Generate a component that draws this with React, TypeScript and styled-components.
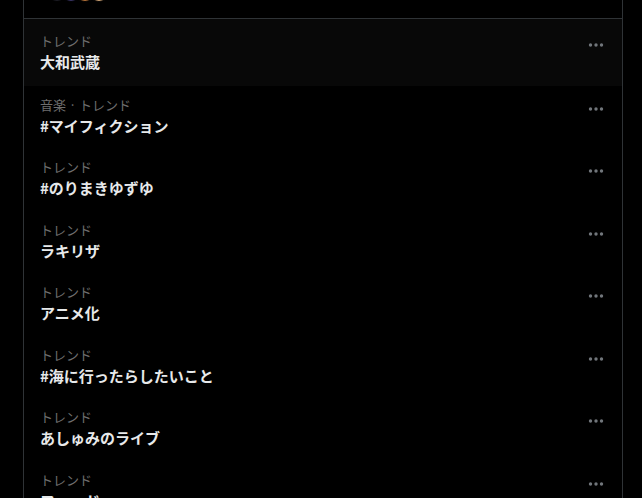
import React from "react";
import styled, { createGlobalStyle } from "styled-components";

const GlobalStyle = createGlobalStyle`
  html, body {
    margin: 0;
    padding: 0;
    background-color: #000000;
    overflow: hidden;
  }
  body {
    font-family: "Noto Sans CJK JP", "Noto Sans", sans-serif;
  }
`;

const Column = styled.div`
  width: 600px;
  margin-left: 23px;
  box-sizing: border-box;
  border-left: 1px solid #2f3336;
  border-right: 1px solid #2f3336;
  min-height: 498px;
`;

const Header = styled.div`
  height: 18px;
  border-bottom: 1px solid #2f3336;
  overflow: hidden;
`;

const Avatars = styled.div`
  display: flex;
  margin-top: -20px;
  margin-left: 22px;
`;

const Avatar = styled.div<{ color: string }>`
  width: 20px;
  height: 20px;
  border-radius: 50%;
  background: ${({ color }) => color};
  margin-right: -8px;
  border: 1px solid #000;
`;

const List = styled.div`
  display: flex;
  flex-direction: column;
`;

const Row = styled.div<{ first?: boolean; hovered?: boolean }>`
  display: flex;
  justify-content: space-between;
  box-sizing: border-box;
  height: ${({ first }) => (first ? "67px" : "62.5px")};
  padding: ${({ first }) => (first ? "13px 18px 0 16px" : "9.5px 18px 0 16px")};
  background-color: ${({ hovered }) => (hovered ? "#080808" : "transparent")};
`;

const Texts = styled.div`
  display: flex;
  flex-direction: column;
`;

const Label = styled.span`
  font-size: 13px;
  line-height: 18px;
  color: #6e6e6e;
  white-space: nowrap;
`;

const Title = styled.span`
  font-size: 15px;
  line-height: 24px;
  font-weight: 700;
  color: #e7e9ea;
  white-space: nowrap;
`;

const More = styled.svg`
  flex-shrink: 0;
  margin-top: 10px;
  width: 16px;
  height: 6px;
  fill: #71767b;
`;

type Trend = {
  label: string;
  title: string;
};

const trends: Trend[] = [
  { label: "トレンド", title: "大和武蔵" },
  { label: "音楽 · トレンド", title: "#マイフィクション" },
  { label: "トレンド", title: "#のりまきゆずゆ" },
  { label: "トレンド", title: "ラキリザ" },
  { label: "トレンド", title: "アニメ化" },
  { label: "トレンド", title: "#海に行ったらしたいこと" },
  { label: "トレンド", title: "あしゅみのライブ" },
  { label: "トレンド", title: "フェード" },
];

const MoreIcon = () => (
  <More viewBox="0 0 16 6">
    <circle cx="2.5" cy="3" r="1.7" />
    <circle cx="8" cy="3" r="1.7" />
    <circle cx="13.5" cy="3" r="1.7" />
  </More>
);

const App = (): JSX.Element => {
  return (
    <>
      <GlobalStyle />
      <Column>
        <Header>
          <Avatars>
            <Avatar color="#1c1c24" />
            <Avatar color="#3a3566" />
            <Avatar color="#b8743a" />
            <Avatar color="#d2a677" />
          </Avatars>
        </Header>
        <List>
          {trends.map((trend, i) => (
            <Row key={i} first={i === 0} hovered={i === 0}>
              <Texts>
                <Label>{trend.label}</Label>
                <Title>{trend.title}</Title>
              </Texts>
              <MoreIcon />
            </Row>
          ))}
        </List>
      </Column>
    </>
  );
};

export default App;
